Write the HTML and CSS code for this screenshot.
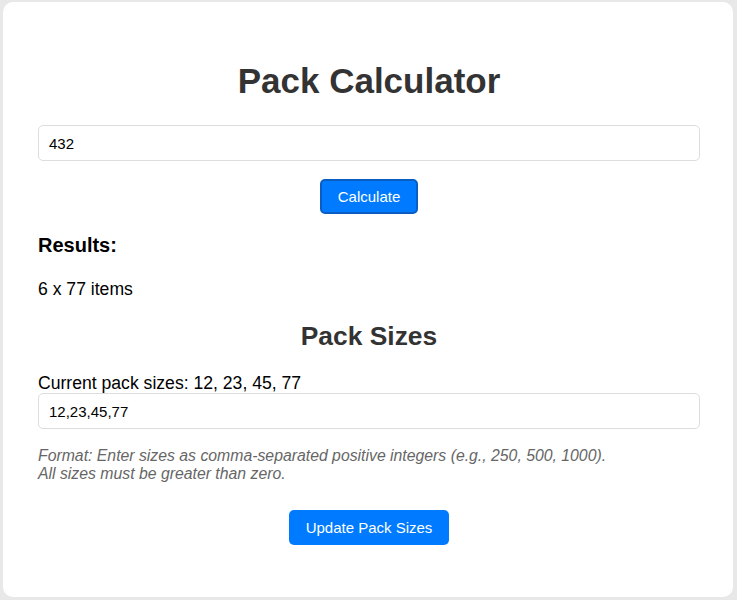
FILE: index.html
```html
<!DOCTYPE html>
<html lang="en">
<head>
<meta charset="utf-8">
<title>Pack Calculator</title>
<link rel="stylesheet" href="styles.css">
</head>
<body>
<main class="card">
  <h1 class="title">Pack Calculator</h1>
  <input class="field field-order" type="text" value="432">
  <div class="actions actions-calc">
    <button class="btn btn-focused" type="button">Calculate</button>
  </div>
  <h3 class="results-title">Results:</h3>
  <p class="result-line">6 x 77 items</p>
  <h2 class="subtitle">Pack Sizes</h2>
  <p class="current">Current pack sizes: 12, 23, 45, 77</p>
  <input class="field field-sizes" type="text" value="12,23,45,77">
  <p class="hint">Format: Enter sizes as comma-separated positive integers (e.g., 250, 500, 1000).<br>All sizes must be greater than zero.</p>
  <div class="actions actions-update">
    <button class="btn" type="button">Update Pack Sizes</button>
  </div>
</main>
</body>
</html>
```

FILE: styles.css
```css
html, body {
  margin: 0;
  padding: 0;
}
body {
  background: #e8e8e8;
  font-family: "Liberation Sans", Arial, sans-serif;
  padding: 2px 4px 3px 3px;
  height: 600px;
  box-sizing: border-box;
}
.card {
  background: #ffffff;
  border-radius: 10px;
  height: 595px;
  box-sizing: border-box;
  padding: 59px 33px 0 35px;
  display: flex;
  flex-direction: column;
}
.title {
  margin: 0;
  font-size: 35px;
  line-height: 40px;
  font-weight: bold;
  color: #333333;
  text-align: center;
}
.field {
  display: block;
  width: 100%;
  box-sizing: border-box;
  height: 36px;
  border: 1px solid #dddddd;
  border-radius: 5px;
  padding: 0 10px;
  font-family: "Liberation Sans", Arial, sans-serif;
  font-size: 15px;
  color: #000000;
  background: #ffffff;
  outline: none;
}
.field-order {
  margin-top: 24px;
}
.actions {
  display: flex;
  justify-content: center;
}
.actions-calc {
  margin-top: 18px;
}
.btn {
  background: #007bff;
  color: #ffffff;
  border: 0;
  border-radius: 5px;
  height: 35px;
  padding: 0 17px;
  font-family: "Liberation Sans", Arial, sans-serif;
  font-size: 15px;
}
.btn-focused {
  border: 2px solid #0a5ec2;
  padding: 0 16px;
}
.results-title {
  margin: 20px 0 0;
  font-size: 20px;
  line-height: 23px;
  font-weight: bold;
  color: #000000;
}
.result-line {
  margin: 22px 0 0;
  font-size: 17.6px;
  line-height: 20px;
  color: #000000;
}
.subtitle {
  margin: 22px 0 0;
  font-size: 26.4px;
  line-height: 30px;
  font-weight: bold;
  color: #333333;
  text-align: center;
}
.current {
  margin: 22px 0 0;
  font-size: 17.6px;
  line-height: 20px;
  color: #000000;
}
.field-sizes {
  margin-top: 0;
}
.hint {
  margin: 18px 0 0;
  font-size: 15.8px;
  line-height: 18px;
  font-style: italic;
  color: #666666;
}
.actions-update {
  margin-top: 27px;
}
```
